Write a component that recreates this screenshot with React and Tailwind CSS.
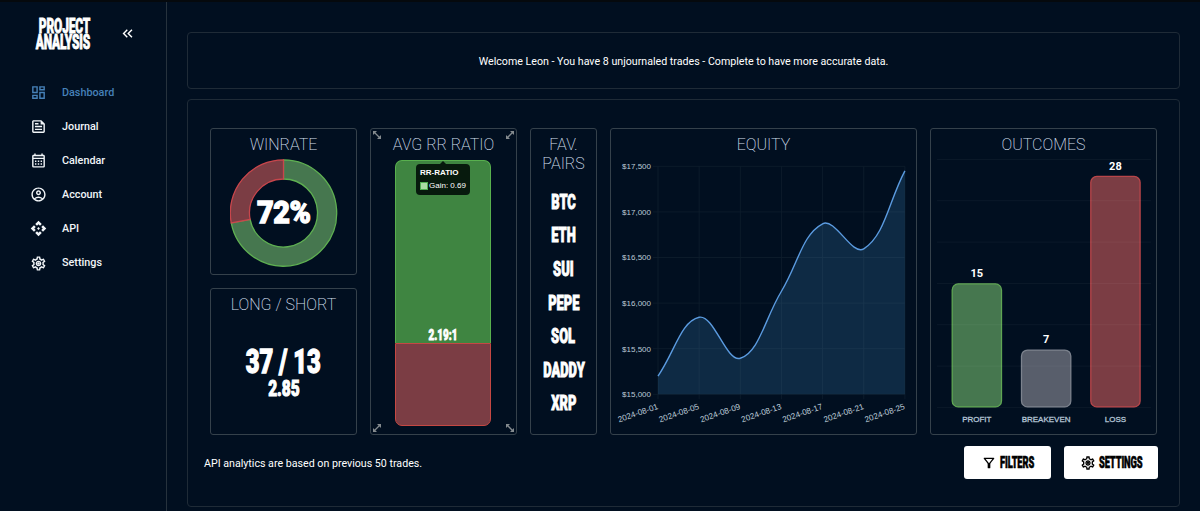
import {
  MdApi,
  MdKeyboardDoubleArrowLeft,
  MdOutlineAccountCircle,
  MdOutlineCalendarMonth,
  MdOutlineDashboard,
  MdOutlineFeed,
  MdOutlineFilterAlt,
  MdOutlineSettings,
} from 'react-icons/md'

// Outlined gear with a solid hub
function GearIcon({ className }) {
  return (
    <svg className={className} viewBox="0 0 24 24" fill="currentColor">
      <MdOutlineSettings size={24} />
      <circle cx="12" cy="12" r="1.700" />
    </svg>
  )
}

const navItems = [
  { label: 'Dashboard', icon: MdOutlineDashboard, active: true },
  { label: 'Journal', icon: MdOutlineFeed },
  { label: 'Calendar', icon: MdOutlineCalendarMonth },
  { label: 'Account', icon: MdOutlineAccountCircle },
  { label: 'API', icon: MdApi },
  { label: 'Settings', icon: GearIcon },
]

const pairs = ['BTC', 'ETH', 'SUI', 'PEPE', 'SOL', 'DADDY', 'XRP']

const equity = [
  { date: '2024-08-01', value: 15200 },
  { date: '2024-08-05', value: 15845 },
  { date: '2024-08-09', value: 15395 },
  { date: '2024-08-13', value: 16130 },
  { date: '2024-08-17', value: 16870 },
  { date: '2024-08-21', value: 16595 },
  { date: '2024-08-25', value: 17450 },
]

const outcomes = [
  { label: 'PROFIT', value: 15, fill: '#46774f', stroke: '#5fa653' },
  { label: 'BREAKEVEN', value: 7, fill: '#585e6b', stroke: '#7c828d' },
  { label: 'LOSS', value: 28, fill: '#7b3d44', stroke: '#b8464a' },
]

// Heavy condensed display text
function Display({ children, className = '' }) {
  return (
    <span className={`inline-block whitespace-nowrap font-black ${className}`}>
      {children}
    </span>
  )
}

function Card({ title, className = '', children }) {
  return (
    <section className={`relative flex flex-col items-center rounded-[3px] border border-[#35414b] pt-[6px] ${className}`}>
      <h2 className="text-center text-[16px] font-extralight leading-[19px] text-[#d2dfec]">{title}</h2>
      {children}
    </section>
  )
}

function Sidebar() {
  return (
    <aside className="flex w-[167px] shrink-0 flex-col border-r border-[#26323d]">
      <div className="flex h-[73.500px] items-start pl-[31px] pt-[17px]">
        <div className="flex w-[59px] flex-col items-end">
          <Display className="h-4 origin-right scale-x-[0.61] text-[19.500px] leading-4 tracking-[-0.2px] [-webkit-text-stroke:0.8px_white]">PROJECT</Display>
          <Display className="h-4 origin-right scale-x-[0.61] text-[19.500px] leading-4 tracking-[-0.2px] [-webkit-text-stroke:0.8px_white]">ANALYSIS</Display>
        </div>
        <MdKeyboardDoubleArrowLeft className="ml-[29px] mt-[6px] size-[17px]" />
      </div>
      <nav>
        {navItems.map(({ label, icon: Icon, active }) => (
          <a key={label} className={`flex h-[34.1px] items-center pl-[30px] text-[10.800px] font-medium ${active ? 'text-[#4681b8]' : 'text-[#f1f5f8]'}`}>
            <Icon className="size-[17px]" />
            <span className="ml-[15px] pt-[1px]">{label}</span>
          </a>
        ))}
      </nav>
    </aside>
  )
}

function WinrateChart() {
  const r = 43.4
  const start = -Math.PI / 2
  const end = start + 0.72 * 2 * Math.PI
  const slice = (a, b, large) => {
    const p = (rad, ang) => `${53.5 + rad * Math.cos(ang)} ${54 + rad * Math.sin(ang)}`
    return `M${p(r + 9.8, a)}A53.2 53.2 0 ${large} 1 ${p(r + 9.8, b)}L${p(r - 9.4, b)}A34 34 0 ${large} 0 ${p(r - 9.4, a)}Z`
  }
  return (
    <div className="relative mt-[5px] flex size-[108px] items-center justify-center">
      <svg className="absolute inset-0" width="108" height="108">
        <path d={slice(start, end, 1)} fill="#46774f" stroke="#5fb052" strokeWidth="1.3" />
        <path d={slice(end, start + 2 * Math.PI, 0)} fill="#7b3d44" stroke="#c8464c" strokeWidth="1.3" />
      </svg>
      <Display className="relative -top-[1px] scale-x-[0.9] text-[32px] leading-8 tracking-[-0.5px] [-webkit-text-stroke:1.3px_white]">72%</Display>
    </div>
  )
}

function ExpandIcon({ className }) {
  return (
    <svg className={`absolute size-2 ${className}`} viewBox="0 0 8 8" fill="#858b8f" stroke="#858b8f">
      <path d="M0 0h4L0 4zM8 8V4L4 8z" stroke="none" />
      <path d="M1 1l6 6" strokeWidth="1.3" />
    </svg>
  )
}

function RatioCard() {
  return (
    <Card title="AVG RR RATIO" className="w-[147px]">
      <ExpandIcon className="left-[2px] top-[2px]" />
      <ExpandIcon className="right-[2px] top-[2px] -scale-x-100" />
      <ExpandIcon className="bottom-[2px] left-[2px] -scale-x-100" />
      <ExpandIcon className="bottom-[2px] right-[2px]" />
      <div className="-ml-[1px] mt-[6px] flex h-[266px] w-24 flex-col">
        <div className="flex h-[183px] items-end justify-center rounded-t-[7px] border border-b-0 border-[#58b04e] bg-[#3f8541]">
          <Display className="scale-x-[0.66] text-[15px] leading-4 [-webkit-text-stroke:0.8px_white]">2.19:1</Display>
        </div>
        <div className="flex-1 rounded-b-[7px] border border-[#c54843] bg-[#7b3d44]" />
      </div>
      <div className="absolute left-[45px] top-[35px] h-[31px] w-[54px] rounded-[4px] bg-[#071a0d] pl-[4px] pt-[3px] font-['Liberation_Sans',sans-serif] text-[8px] leading-[12px] text-white">
        <span className="absolute -top-[3px] left-[23.500px] border-x-[3.500px] border-b-[3.500px] border-x-transparent border-b-[#071a0d]" />
        <p className="font-bold leading-[11px]">RR-RATIO</p>
        <p className="mt-[2px] flex items-center whitespace-nowrap">
          <span className="mr-[1px] size-[8px] border border-[#4fae50] bg-[#a9dba4]" />
          Gain: 0.69
        </p>
      </div>
    </Card>
  )
}

const tension = 0.4

function curvePath(pts) {
  const ctrl = pts.map((p, i) => {
    const prev = pts[i - 1] || p
    const next = pts[i + 1] || p
    const d01 = Math.hypot(p.x - prev.x, p.y - prev.y)
    const d12 = Math.hypot(next.x - p.x, next.y - p.y)
    const a = (tension * d01) / (d01 + d12)
    const b = (tension * d12) / (d01 + d12)
    const dx = next.x - prev.x
    const dy = next.y - prev.y
    return { inX: p.x - a * dx, inY: p.y - a * dy, outX: p.x + b * dx, outY: p.y + b * dy }
  })
  return pts.slice(1).reduce(
    (d, p, i) => `${d}C${ctrl[i].outX} ${ctrl[i].outY} ${ctrl[i + 1].inX} ${ctrl[i + 1].inY} ${p.x} ${p.y}`,
    `M${pts[0].x} ${pts[0].y}`
  )
}

function EquityChart() {
  const left = 47
  const bottom = 240.3
  const stepX = 41.15
  const stepY = 45.6
  const pts = equity.map((e, i) => ({ x: left + i * stepX, y: bottom - ((e.value - 15000) / 500) * stepY }))
  const line = curvePath(pts)
  const right = left + 6 * stepX
  return (
    <svg className="font-['Liberation_Sans',sans-serif]" width="305" height="280" fontSize="8" fill="#bccad7">
      {[0, 1, 2, 3, 4, 5].map(i => (
        <g key={i}>
          <path d={`M${left - 5} ${bottom - i * stepY}H${right}`} stroke="#0f1e2d" strokeWidth="0.8" />
          <text x={left - 7} y={bottom - i * stepY + 2.8} textAnchor="end">
            {`$${(15000 + i * 500).toLocaleString('en-US')}`}
          </text>
        </g>
      ))}
      {pts.map((p, i) => (
        <g key={i}>
          <path d={`M${p.x} ${bottom - 5 * stepY}V${bottom + 5}`} stroke="#0f1e2d" strokeWidth="0.8" />
          <text textAnchor="end" transform={`translate(${p.x + 0.5} ${bottom + 14.500}) rotate(-19)`} fontSize="8.200">
            {equity[i].date}
          </text>
        </g>
      ))}
      <path d={`${line}V${bottom}H${left}Z`} fill="#4d9de0" fillOpacity="0.19" />
      <path d={line} fill="none" stroke="#5b9be0" strokeWidth="1.4" />
    </svg>
  )
}

function OutcomesChart() {
  const bottom = 253.4
  const unit = 8.267
  return (
    <svg width="225" height="280" textAnchor="middle">
      {outcomes.map((o, i) => {
        const x = 21.200 + i * 69.300
        const h = o.value * unit
        return (
          <g key={o.label}>
            <rect x={x} y={bottom - h + 0.5} width="49.300" height={h - 1} rx="6" fill={o.fill} stroke={o.stroke} strokeWidth="1.3" />
            <text x={x + 24.600} y={bottom - h - 6.300} fill="#fff" fontSize="11" fontWeight="700">{o.value}</text>
            <text className="font-['Liberation_Sans',sans-serif]" x={x + 24.600} y={bottom + 15} fill="#b4c5d6" fontSize="8" stroke="#b4c5d6" strokeWidth="0.3">
              {o.label}
            </text>
          </g>
        )
      })}
      {[0, 1, 2, 3, 4, 5, 6].map(i => (
        <path key={i} d={`M6 ${bottom - i * 41.330}H220`} stroke="#fff" strokeOpacity="0.055" strokeWidth="0.8" />
      ))}
    </svg>
  )
}

function ActionButton({ icon: Icon, label, className }) {
  return (
    <button className={`flex h-[33px] items-center rounded-[3px] bg-white text-black ${className}`}>
      <Icon className="size-4 shrink-0" />
      <Display className="ml-[3px] w-0 origin-left scale-x-[0.58] text-[16px] leading-4 tracking-[-0.2px] [-webkit-text-stroke:0.6px_black]">{label}</Display>
    </button>
  )
}

export default function App() {
  return (
    <div className="flex h-[511px] w-[1200px] overflow-hidden border-t-2 border-[#05090d] bg-[#010f20] font-[Roboto,sans-serif] text-white">
      <Sidebar />
      <main className="flex flex-1 flex-col pl-5 pr-5 pt-[30px]">
        <div className="flex h-[57px] shrink-0 items-center justify-center rounded-[4px] border border-[#1f2b37] pt-[2px] text-[10.670px]">
          Welcome Leon - You have 8 unjournaled trades - Complete to have more accurate data.
        </div>
        <div className="mt-[10px] h-[408px] shrink-0 rounded-[4px] border border-[#1f2b37] pl-[22px] pr-[21px] pt-[28px]">
          <div className="flex h-[307px] gap-[13px]">
            <div className="flex w-[147px] flex-col gap-[13px]">
              <Card title="WINRATE" className="h-[147px]">
                <WinrateChart />
              </Card>
              <Card title="LONG / SHORT" className="h-[147px]">
                <Display className="mt-[34px] h-[27px] scale-x-[0.72] text-[33px] leading-[27px] [-webkit-text-stroke:1.3px_white]">37 / 13</Display>
                <Display className="mt-[3px] scale-x-[0.72] text-[21.500px] leading-[22px] [-webkit-text-stroke:1px_white]">2.85</Display>
              </Card>
            </div>
            <RatioCard />
            <Card title={<>FAV.<br />PAIRS</>} className="w-[67px]">
              <ul className="mt-[12px] flex flex-col items-center">
                {pairs.map(pair => (
                  <li key={pair} className="flex h-[33.600px] w-16 items-center justify-center">
                    <Display className="scale-x-[0.63] text-[20.500px] leading-5 [-webkit-text-stroke:0.9px_white]">{pair}</Display>
                  </li>
                ))}
              </ul>
            </Card>
            <Card title="EQUITY" className="w-[307px]">
              <EquityChart />
            </Card>
            <Card title="OUTCOMES" className="w-[227px]">
              <OutcomesChart />
            </Card>
          </div>
          <div className="mt-[11px] flex h-[33px] items-center justify-between">
            <p className="-ml-[6px] pt-[2px] text-[10.670px]">API analytics are based on previous 50 trades.</p>
            <div className="flex gap-[13px]">
              <ActionButton icon={MdOutlineFilterAlt} label="FILTERS" className="w-[87px] pl-[17px]" />
              <ActionButton icon={GearIcon} label="SETTINGS" className="w-[94px] pl-4" />
            </div>
          </div>
        </div>
      </main>
    </div>
  )
}
